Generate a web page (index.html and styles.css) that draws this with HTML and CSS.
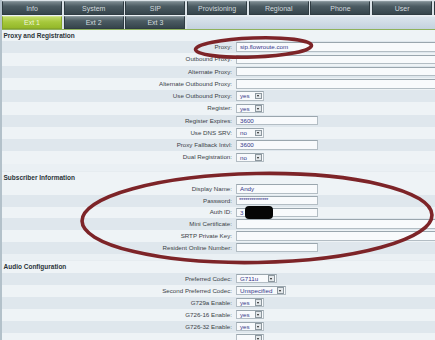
FILE: index.html
```html
<!DOCTYPE html>
<html>
<head>
<meta charset="utf-8">
<link rel="stylesheet" href="styles.css">
</head>
<body>
<div class="page">
  <nav class="tabs tabs-main">
    <span class="tab">Info</span>
    <span class="tab">System</span>
    <span class="tab">SIP</span>
    <span class="tab">Provisioning</span>
    <span class="tab">Regional</span>
    <span class="tab">Phone</span>
    <span class="tab">User</span>
    <span class="tab"></span>
  </nav>
  <nav class="tabs tabs-sub">
    <span class="tab active">Ext 1</span>
    <span class="tab">Ext 2</span>
    <span class="tab">Ext 3</span>
    <span class="filler"></span>
  </nav>

  <section class="group g-proxy">
    <h2 class="group-title">Proxy and Registration</h2>
    <div class="row shade"><span class="label">Proxy:</span><span class="value"><span class="field wide">sip.flowroute.com</span></span></div>
    <div class="row"><span class="label">Outbound Proxy:</span><span class="value"><span class="field wide"></span></span></div>
    <div class="row shade"><span class="label">Alternate Proxy:</span><span class="value"><span class="field wide"></span></span></div>
    <div class="row"><span class="label">Alternate Outbound Proxy:</span><span class="value"><span class="field wide"></span></span></div>
    <div class="row shade"><span class="label">Use Outbound Proxy:</span><span class="value"><span class="select">yes<span class="drop"></span></span></span></div>
    <div class="row"><span class="label">Register:</span><span class="value"><span class="select">yes<span class="drop"></span></span></span></div>
    <div class="row shade"><span class="label">Register Expires:</span><span class="value"><span class="field short">3600</span></span></div>
    <div class="row"><span class="label">Use DNS SRV:</span><span class="value"><span class="select">no<span class="drop"></span></span></span></div>
    <div class="row shade"><span class="label">Proxy Fallback Intvl:</span><span class="value"><span class="field short">3600</span></span></div>
    <div class="row"><span class="label">Dual Registration:</span><span class="value"><span class="select">no<span class="drop"></span></span></span></div>
  </section>

  <section class="group g-sub">
    <h2 class="group-title">Subscriber Information</h2>
    <div class="row"><span class="label">Display Name:</span><span class="value"><span class="field short">Andy</span></span></div>
    <div class="row shade"><span class="label">Password:</span><span class="value"><span class="field short pw">**************</span></span></div>
    <div class="row"><span class="label">Auth ID:</span><span class="value"><span class="field short redacted">3<span class="blot"></span></span></span></div>
    <div class="row shade"><span class="label">Mini Certificate:</span><span class="value"><span class="field wide"></span></span></div>
    <div class="row"><span class="label">SRTP Private Key:</span><span class="value"><span class="field wide"></span></span></div>
    <div class="row shade"><span class="label">Resident Online Number:</span><span class="value"><span class="field short"></span></span></div>
  </section>

  <section class="group g-audio">
    <h2 class="group-title">Audio Configuration</h2>
    <div class="row shade"><span class="label">Preferred Codec:</span><span class="value"><span class="select codec">G711u<span class="drop"></span></span></span></div>
    <div class="row"><span class="label">Second Preferred Codec:</span><span class="value"><span class="select codec2">Unspecified<span class="drop"></span></span></span></div>
    <div class="row shade"><span class="label">G729a Enable:</span><span class="value"><span class="select">yes<span class="drop"></span></span></span></div>
    <div class="row"><span class="label">G726-16 Enable:</span><span class="value"><span class="select">yes<span class="drop"></span></span></span></div>
    <div class="row shade"><span class="label">G726-32 Enable:</span><span class="value"><span class="select">yes<span class="drop"></span></span></span></div>
    <div class="row"><span class="label"></span><span class="value"><span class="select"><span class="drop"></span></span></span></div>
  </section>

  <svg class="marks" width="435" height="340" viewBox="0 0 435 340">
    <ellipse cx="253.5" cy="47.5" rx="58" ry="9.5" transform="rotate(-2 253.5 47.5)"/>
    <ellipse cx="257" cy="218" rx="175" ry="44.5" transform="rotate(-1 257 218)"/>
  </svg>
</div>
</body>
</html>
```

FILE: styles.css
```css
html, body {
  margin: 0;
  padding: 0;
  overflow: hidden;
  background: #e8eef2;
}

.page {
  position: relative;
  width: 435px;
  height: 340px;
  overflow: hidden;
  box-sizing: border-box;
  border-left: 2px solid #b3c1ca;
  font-family: "Liberation Sans", Arial, sans-serif;
  color: #3a4045;
  background: #eaf0f4;
}

.tabs {
  display: flex;
  gap: 1.7px;
  white-space: nowrap;
}

.tabs-main {
  height: 14px;
  padding-top: 1px;
  background: #dbe3e8;
}

.tabs-sub {
  height: 13px;
  margin-top: 1px;
  border-bottom: 1px solid #8fb25c;
  background: #dbe3e8;
}

.tab {
  flex: none;
  width: 60px;
  box-sizing: border-box;
  text-align: center;
  font-size: 7px;
  line-height: 13px;
  color: #d3dbdf;
  background: linear-gradient(#77868c 0%, #4c5c63 35%, #36454c 100%);
  border: 1px solid #2f3c42;
  border-top-color: #8a989e;
  overflow: hidden;
}

.tabs-sub .tab {
  line-height: 12px;
}

.tab.active {
  color: #eef5dc;
  background: linear-gradient(#c2dc6a 0%, #a6c83c 45%, #94b82a 100%);
  border-color: #86a62a;
  border-top-color: #d2e68a;
}

.filler {
  flex: 1;
  background: linear-gradient(#dae4ec, #c4d2de);
  border-top: 1px solid #e4ebf1;
}

.group-title {
  margin: 0;
  padding-left: 1.5px;
  font-size: 6.5px;
  font-weight: bold;
  color: #2b3338;
  height: 11px;
  line-height: 11px;
  background: #eef3f6;
}

.g-sub, .g-audio {
  border-top: 1px solid #e6ecf0;
}

.g-sub { margin-top: 7.5px; }
.g-audio { margin-top: 6px; }
.g-audio .group-title { height: 12px; line-height: 12px; }

.row {
  display: grid;
  grid-template-columns: 234px 1fr;
  align-items: center;
  height: 12.25px;
  background: #eef3f6;
}

.g-sub .row { height: 11.75px; }
.g-audio .row { height: 12px; }

.row.shade {
  background: #dfe7ed;
}

.label {
  text-align: right;
  padding-right: 4px;
  font-size: 6.2px;
  line-height: 8px;
  white-space: nowrap;
  color: #3b4247;
}

.value {
  display: flex;
  align-items: center;
  height: 100%;
}

.field {
  display: inline-block;
  box-sizing: border-box;
  height: 9.5px;
  padding: 0 3px;
  font-size: 6.2px;
  line-height: 8px;
  color: #34348a;
  background: #f8fafc;
  border: 1px solid #b3bdc4;
  border-top-color: #9aa6ae;
  white-space: nowrap;
}

.field.wide { width: 215px; }
.field.short { width: 82px; }
.field.pw { font-size: 6px; letter-spacing: -0.25px; line-height: 7px; padding-left: 2px; }

.redacted { position: relative; }

.blot {
  position: absolute;
  left: 8px;
  top: -3px;
  width: 28px;
  height: 13px;
  border-radius: 4px;
  background: #050505;
}

.select {
  position: relative;
  display: inline-block;
  box-sizing: border-box;
  width: 27.5px;
  height: 9.5px;
  padding-left: 3px;
  font-size: 6.2px;
  line-height: 8px;
  color: #34348a;
  background: #f8fafc;
  border: 1px solid #b3bdc4;
  border-top-color: #9aa6ae;
}

.select.codec { width: 41px; }
.select.codec2 { width: 50px; }

.drop {
  position: absolute;
  right: 1px;
  top: 0.5px;
  width: 7px;
  height: 6.5px;
  box-sizing: border-box;
  background: #e4e8eb;
  border: 1px solid #8d989f;
}

.drop::after {
  content: "";
  position: absolute;
  left: 1.2px;
  top: 1.6px;
  border-left: 1.6px solid transparent;
  border-right: 1.6px solid transparent;
  border-top: 2px solid #1a1a1a;
}

.marks {
  position: absolute;
  left: -2px;
  top: 0;
  pointer-events: none;
}

.marks ellipse {
  fill: none;
  stroke: #7d2428;
  stroke-width: 3.6;
}
```
